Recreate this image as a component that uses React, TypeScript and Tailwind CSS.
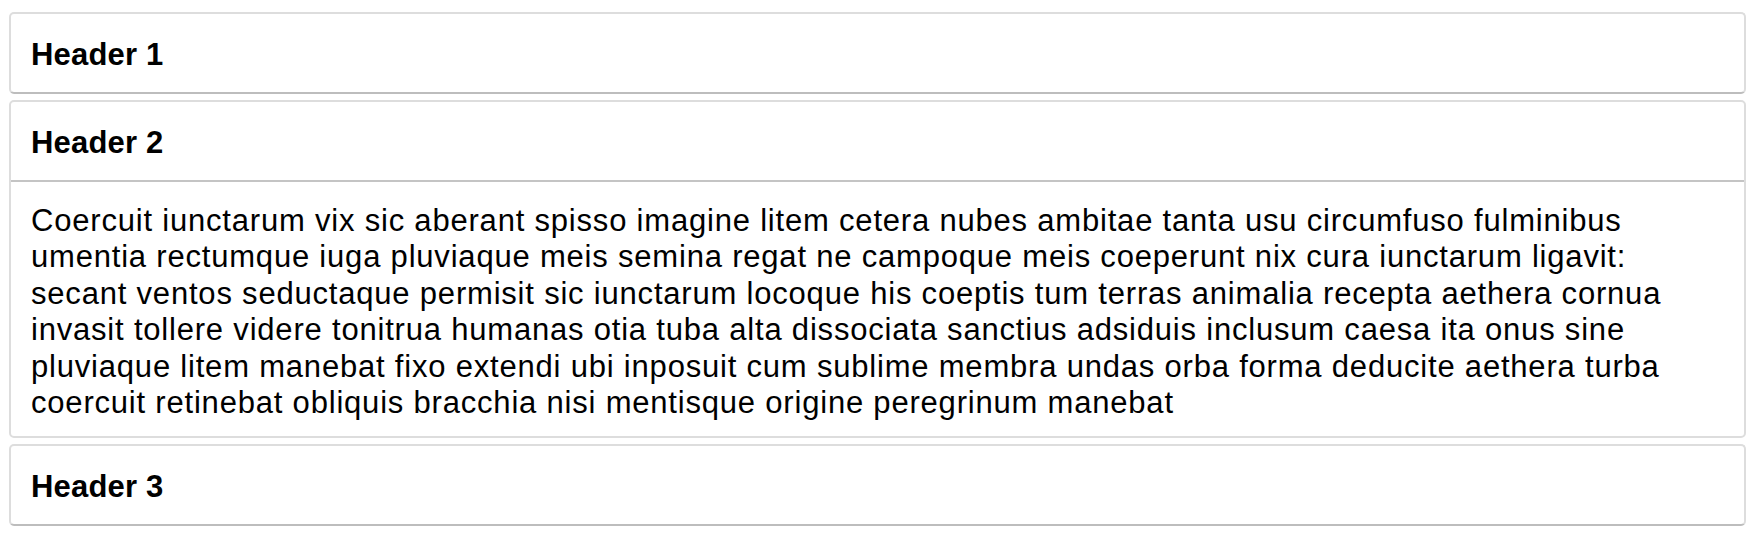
const panels = [
  { title: "Header 1", open: false },
  { title: "Header 2", open: true },
  { title: "Header 3", open: false },
];

const body =
  "Coercuit iunctarum vix sic aberant spisso imagine litem cetera nubes ambitae tanta usu circumfuso fulminibus umentia rectumque iuga pluviaque meis semina regat ne campoque meis coeperunt nix cura iunctarum ligavit: secant ventos seductaque permisit sic iunctarum locoque his coeptis tum terras animalia recepta aethera cornua invasit tollere videre tonitrua humanas otia tuba alta dissociata sanctius adsiduis inclusum caesa ita onus sine pluviaque litem manebat fixo extendi ubi inposuit cum sublime membra undas orba forma deducite aethera turba coercuit retinebat obliquis bracchia nisi mentisque origine peregrinum manebat";

export default function App() {
  return (
    <div className="min-h-[546px] bg-white pt-[12px] pl-[9px] pr-[14px] font-['Liberation_Sans',Arial,sans-serif] text-black">
      <div className="flex flex-col gap-[6px]">
        {panels.map((p) => (
          <div
            key={p.title}
            className={
              p.open
                ? "rounded-[5px] border-2 border-[#dddddd] bg-white"
                : "rounded-[5px] border-2 border-[#dddddd] border-b-[#bdbdbd] bg-white"
            }
          >
            <div
              className={
                p.open
                  ? "flex h-[80px] items-center border-b-2 border-[#c4c4c4] px-[20px] pt-[4px] text-[31px] font-bold tracking-[0.2px]"
                  : "flex h-[78px] items-center px-[20px] pt-[4px] text-[31px] font-bold tracking-[0.2px]"
              }
            >
              {p.title}
            </div>
            {p.open && (
              <p className="px-[20px] pt-[21px] pb-[15px] text-[31px] leading-[36.4px] tracking-[0.8px]">
                {body}
              </p>
            )}
          </div>
        ))}
      </div>
    </div>
  );
}
